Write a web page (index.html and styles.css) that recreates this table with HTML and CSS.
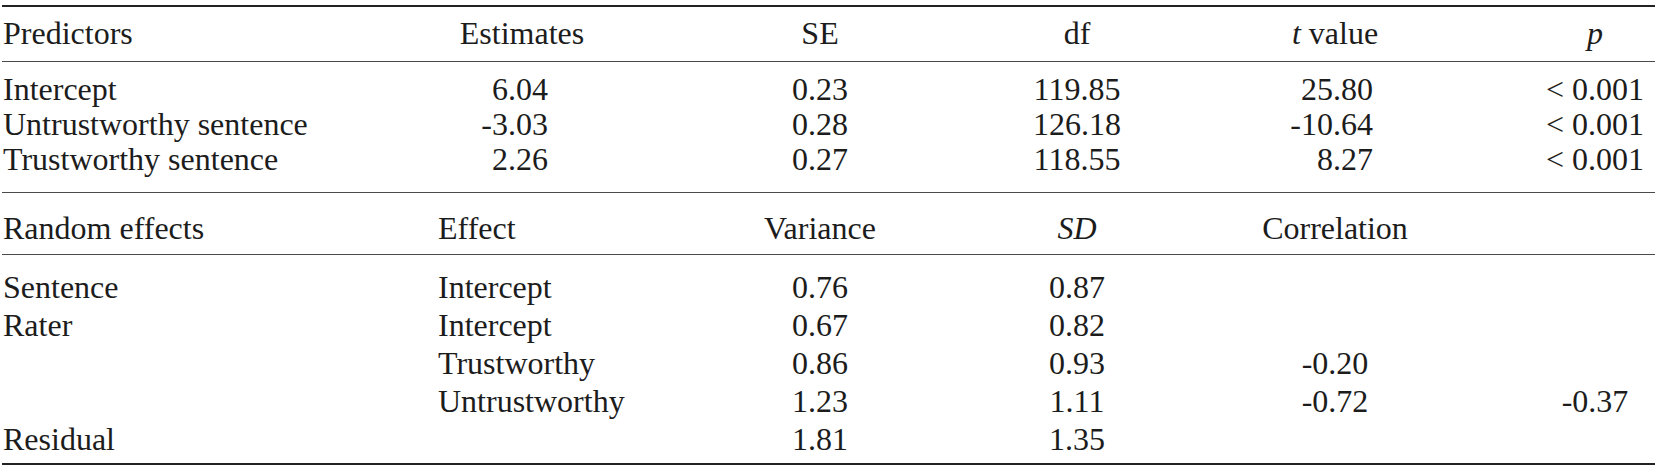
FILE: index.html
```html
<!DOCTYPE html>
<html lang="en">
<head>
<meta charset="utf-8">
<title>Mixed model table</title>
<link rel="stylesheet" href="styles.css">
</head>
<body>
<div class="table">
  <div class="band head head-fixed">
    <div class="cell label">Predictors</div>
    <div class="cell num">Estimates</div>
    <div class="cell num">SE</div>
    <div class="cell num">df</div>
    <div class="cell num"><i>t</i> value</div>
    <div class="cell num"><i>p</i></div>
  </div>
  <div class="band body body-fixed">
    <div class="cell label">Intercept</div>
    <div class="cell est">6.04</div>
    <div class="cell num">0.23</div>
    <div class="cell num">119.85</div>
    <div class="cell tval">25.80</div>
    <div class="cell num">&lt; 0.001</div>

    <div class="cell label">Untrustworthy sentence</div>
    <div class="cell est">-3.03</div>
    <div class="cell num">0.28</div>
    <div class="cell num">126.18</div>
    <div class="cell tval">-10.64</div>
    <div class="cell num">&lt; 0.001</div>

    <div class="cell label">Trustworthy sentence</div>
    <div class="cell est">2.26</div>
    <div class="cell num">0.27</div>
    <div class="cell num">118.55</div>
    <div class="cell tval">8.27</div>
    <div class="cell num">&lt; 0.001</div>
  </div>
  <div class="band head head-random">
    <div class="cell label">Random effects</div>
    <div class="cell sub">Effect</div>
    <div class="cell num">Variance</div>
    <div class="cell num"><i>SD</i></div>
    <div class="cell num">Correlation</div>
    <div class="cell num"></div>
  </div>
  <div class="band body body-random">
    <div class="cell label">Sentence</div>
    <div class="cell sub">Intercept</div>
    <div class="cell num">0.76</div>
    <div class="cell num">0.87</div>
    <div class="cell num"></div>
    <div class="cell num"></div>

    <div class="cell label">Rater</div>
    <div class="cell sub">Intercept</div>
    <div class="cell num">0.67</div>
    <div class="cell num">0.82</div>
    <div class="cell num"></div>
    <div class="cell num"></div>

    <div class="cell label"></div>
    <div class="cell sub">Trustworthy</div>
    <div class="cell num">0.86</div>
    <div class="cell num">0.93</div>
    <div class="cell num">-0.20</div>
    <div class="cell num"></div>

    <div class="cell label"></div>
    <div class="cell sub">Untrustworthy</div>
    <div class="cell num">1.23</div>
    <div class="cell num">1.11</div>
    <div class="cell num">-0.72</div>
    <div class="cell num">-0.37</div>

    <div class="cell label">Residual</div>
    <div class="cell sub"></div>
    <div class="cell num">1.81</div>
    <div class="cell num">1.35</div>
    <div class="cell num"></div>
    <div class="cell num"></div>
  </div>
</div>
</body>
</html>
```

FILE: styles.css
```css
html, body {
  margin: 0;
  padding: 0;
  background: #ffffff;
}

body {
  font-family: "Liberation Serif", "Times New Roman", serif;
  font-size: 32px;
  color: #1c1c1c;
}

.table {
  margin: 5px 2px 0 2px;
  border-top: 2px solid #222222;
  border-bottom: 2px solid #222222;
}

.band {
  display: grid;
  grid-template-columns: 430px 180px 416px 98px 418px 102px;
}

.band + .band {
  border-top: 1px solid #4a4a4a;
}

.head-fixed {
  padding: 9px 0 10px;
  line-height: 35px;
}

.body-fixed {
  padding: 10px 0 15px;
  line-height: 35px;
}

.head-random {
  padding: 18px 0 8px;
  line-height: 35px;
}

.body-random {
  padding: 13px 0 5px;
  line-height: 38px;
}

.cell {
  white-space: nowrap;
  min-height: 1px;
}

.label {
  text-align: left;
  padding-left: 1px;
}

.sub {
  text-align: left;
  padding-left: 6px;
}

.num {
  text-align: center;
}

.est {
  text-align: right;
  padding-right: 64px;
}

.tval {
  text-align: right;
  padding-right: 171px;
}

i {
  font-style: italic;
}
```
